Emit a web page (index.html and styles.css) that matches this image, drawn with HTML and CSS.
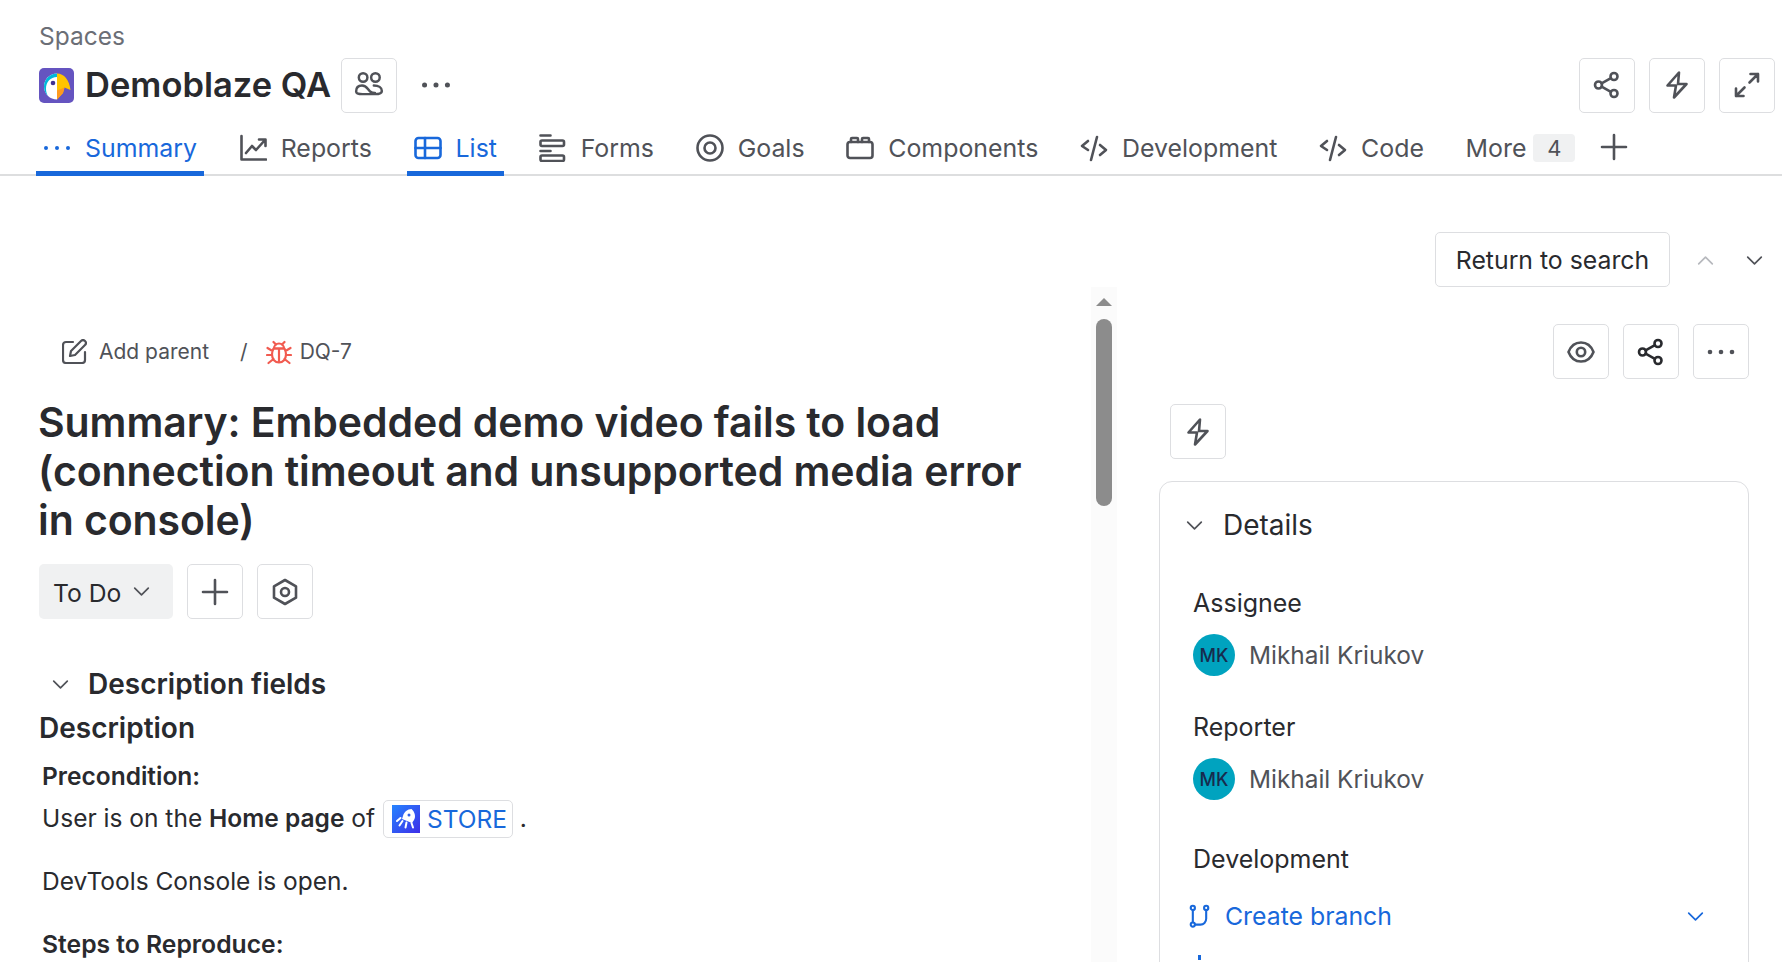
FILE: index.html
```html
<!DOCTYPE html>
<html lang="en">
<head>
<meta charset="utf-8">
<title>Demoblaze QA</title>
<link rel="stylesheet" href="styles.css">
</head>
<body>
<header class="head">
  <div class="spaces">Spaces</div>
  <div class="head-row">
    <svg class="logo" viewBox="0 0 35 35"><rect width="35" height="35" rx="5" fill="#6554c0"/><path d="M18 5.500a13 13 0 0 0 0 26z" fill="#fff"/><path d="M18 5.500a13 13 0 0 0-13 13c0 4 1.500 7 4 9.500-1.500-2.500-2-5-2-7.500C7 14 11.500 9 18 9z" fill="#00b8d9"/><path d="M18 5.500c7 0 12.500 6.500 13.500 16.500l-6-2.500-1.500 5.500-6 6.500z" fill="#ffc400"/><path d="M18 22.500l7.500-3L24 25l-6 6.500z" fill="#ff991f"/><circle cx="14" cy="15" r="2.300" fill="#403294"/></svg>
    <h1 class="space-name">Demoblaze QA</h1>
    <button class="btn head-people" aria-label="People">
      <svg class="ico" viewBox="0 0 28 28"><circle cx="8.500" cy="7" r="4"/><circle cx="20" cy="7" r="4"/><path d="M2 20c0-4 2.500-5.500 5.500-5.500 4.500 0 5 3.500 7.500 5.500 1.500 1.200 3 1.500 4.500 1.500M18.500 14.500c4.500 0 7.500 2 7.500 5 0 2-2 3-6.500 3H8c-4 0-6-.8-6-2.500"/></svg>
    </button>
    <svg class="ico dots-head" viewBox="0 0 28 28"><circle cx="4" cy="14" r="2.200" class="fill"/><circle cx="14" cy="14" r="2.200" class="fill"/><circle cx="24" cy="14" r="2.200" class="fill"/></svg>
    <div class="head-actions">
      <button class="btn" aria-label="Share">
        <svg class="ico" viewBox="0 0 28 28"><use href="#share"/></svg>
      </button>
      <button class="btn" aria-label="Automation">
        <svg class="ico" viewBox="0 0 28 28"><use href="#bolt"/></svg>
      </button>
      <button class="btn" aria-label="Expand">
        <svg class="ico" viewBox="0 0 28 28"><path d="M16.500 11.500L25 3M17.500 3H25v7.500M11.500 16.500L3 25M3 17.500V25h7.500"/></svg>
      </button>
    </div>
  </div>
  <nav class="tabs">
    <a class="tab active"><svg class="ico" viewBox="0 0 28 28"><circle cx="3" cy="14" r="2" class="fill"/><circle cx="14" cy="14" r="2" class="fill"/><circle cx="25" cy="14" r="2" class="fill"/></svg>Summary</a>
    <a class="tab"><svg class="ico" viewBox="0 0 28 28"><path d="M2.500 2v23.500H27M7 19l6-7 4 4 9-10M20 5.500h6.500V12"/></svg>Reports</a>
    <a class="tab active"><svg class="ico" viewBox="0 0 28 28"><rect x="1.500" y="4" width="25" height="20" rx="3"/><path d="M1.500 14h25M11 4v20"/></svg>List</a>
    <a class="tab"><svg class="ico" viewBox="0 0 28 28"><path d="M1.500 1.500h10M1.500 17h10"/><rect x="1.500" y="6.500" width="23.500" height="5.500" rx="1.500"/><rect x="1.500" y="21.500" width="23.500" height="5.500" rx="1.500"/></svg>Forms</a>
    <a class="tab"><svg class="ico" viewBox="0 0 28 28"><circle cx="14" cy="14" r="12.500"/><circle cx="14" cy="14" r="5.500"/></svg>Goals</a>
    <a class="tab"><svg class="ico" viewBox="0 0 28 28"><rect x="1.500" y="8" width="25" height="16" rx="2.500"/><path d="M5 8V5a1 1 0 0 1 1-1h5a1 1 0 0 1 1 1v3M16 8V5a1 1 0 0 1 1-1h5a1 1 0 0 1 1 1v3"/></svg>Components</a>
    <a class="tab"><svg class="ico" viewBox="0 0 28 28"><path d="M8 7l-6 5 6 4M20 11l6 5-6 5M17 3l-6 23"/></svg>Development</a>
    <a class="tab"><svg class="ico" viewBox="0 0 28 28"><path d="M8 7l-6 5 6 4M20 11l6 5-6 5M17 3l-6 23"/></svg>Code</a>
    <a class="tab tab-more">More<span class="badge">4</span></a>
    <svg class="ico tab-plus" viewBox="0 0 28 28"><path d="M14 2v24M2 14h24"/></svg>
  </nav>
</header>

<div class="return-row">
  <button class="btn btn-text">Return to search</button>
  <svg class="ico chev chev-off" viewBox="0 0 20 20"><path d="M2 14l8-8 8 8"/></svg>
  <svg class="ico chev chev-dark" viewBox="0 0 20 20"><path d="M2 6l8 8 8-8"/></svg>
</div>

<main class="work">
  <section class="issue">
    <div class="issue-body">
      <div class="crumbs">
        <svg class="ico crumb-edit" viewBox="0 0 25 25"><path d="M11 3H4a3 3 0 0 0-3 3v15a3 3 0 0 0 3 3h16a3 3 0 0 0 3-3v-8"/><path d="M8 17l1-5L19 2a2.500 2.500 0 0 1 4 4L13 16z"/></svg>
        <span class="crumb-text">Add parent</span>
        <span class="crumb-sep">/</span>
        <svg class="ico bug" viewBox="0 0 26 26"><path d="M8 9.500a5 5 0 0 1 10 0z"/><path d="M7.500 9.500h11c1 2 1.500 4 1.500 6 0 4.500-3 8-7 8s-7-3.500-7-8c0-2 .5-4 1.500-6zM13 10v13M7.500 3L10 5.500M18.500 3L16 5.500M1.500 9l5 3M24.500 9l-5 3M1 16h5M25 16h-5M2.500 24l5-4M23.500 24l-5-4"/></svg>
        <span class="crumb-text crumb-key">DQ-7</span>
      </div>
      <h2 class="issue-title">Summary: Embedded demo video fails to load (connection timeout and unsupported media error in console)</h2>
      <div class="status-row">
        <button class="status">To Do<svg class="ico status-chev" viewBox="0 0 20 20"><path d="M2 6l8 8 8-8"/></svg></button>
        <button class="btn" aria-label="Add"><svg class="ico" viewBox="0 0 28 28"><path d="M14 2v24M2 14h24"/></svg></button>
        <button class="btn" aria-label="Settings"><svg class="ico" viewBox="0 0 28 28"><path d="M14 2l11 6.300v11.400L14 26 3 19.700V8.300z"/><circle cx="14" cy="14" r="4"/></svg></button>
      </div>
      <div class="fields-head">
        <svg class="ico fields-chev" viewBox="0 0 20 20"><path d="M2 6l8 8 8-8"/></svg>
        <h3>Description fields</h3>
      </div>
      <h3 class="desc-label">Description</h3>
      <div class="desc">
        <p class="line"><strong>Precondition:</strong></p>
        <p class="line line-user">User is on the <strong>Home page</strong> of <a class="chip"><svg class="chip-ico" viewBox="0 0 28 28"><defs><linearGradient id="st" x1="0" y1="0" x2="1" y2="1"><stop offset="0" stop-color="#2684ff"/><stop offset="1" stop-color="#3d2ee8"/></linearGradient></defs><rect width="28" height="28" fill="url(#st)"/><path d="M19.500 4c-4 0-7.500 3-8.500 7l-1 3 10 4 2-3c2-3 1-8-2.500-11z" fill="#fff"/><circle cx="17" cy="10" r="1.500" fill="#2f5fe8"/><path d="M8.500 13l-3.500 3M10.500 16l-3 4.500M14.500 17.500l-1 5M19.500 18l1.500 4.500" stroke="#fff" stroke-width="2" stroke-linecap="round" fill="none"/></svg>STORE</a> .</p>
        <p class="line line-dev">DevTools Console is open.</p>
        <p class="line line-steps"><strong>Steps to Reproduce:</strong></p>
      </div>
    </div>
    <div class="scroll">
      <span class="scroll-arrow"></span>
      <span class="scroll-thumb"></span>
    </div>
  </section>

  <aside class="side">
    <div class="side-actions">
      <button class="btn" aria-label="Watch"><svg class="ico" viewBox="0 0 28 28"><path d="M1.500 14C4 7.500 9 4.500 14 4.500S24 7.500 26.500 14C24 20.500 19 23.500 14 23.500S4 20.500 1.500 14z"/><circle cx="14" cy="14" r="4.200"/></svg></button>
      <button class="btn" aria-label="Share"><svg class="ico ico-dark" viewBox="0 0 28 28"><use href="#share"/></svg></button>
      <button class="btn" aria-label="More"><svg class="ico" viewBox="0 0 28 28"><circle cx="3" cy="14" r="2.300" class="fill"/><circle cx="14" cy="14" r="2.300" class="fill"/><circle cx="25" cy="14" r="2.300" class="fill"/></svg></button>
    </div>
    <button class="btn side-bolt" aria-label="Automation"><svg class="ico" viewBox="0 0 28 28"><use href="#bolt"/></svg></button>
    <div class="panel">
      <div class="panel-head">
        <svg class="ico panel-chev" viewBox="0 0 20 20"><path d="M2 6l8 8 8-8"/></svg>
        <span>Details</span>
      </div>
      <div class="label label-assignee">Assignee</div>
      <div class="person"><span class="avatar">MK</span><span>Mikhail Kriukov</span></div>
      <div class="label label-reporter">Reporter</div>
      <div class="person"><span class="avatar">MK</span><span>Mikhail Kriukov</span></div>
      <div class="label label-dev">Development</div>
      <div class="branch">
        <svg class="ico branch-ico" viewBox="0 0 22 24"><circle cx="4" cy="3.500" r="2.200"/><circle cx="18" cy="3.500" r="2.200"/><circle cx="4" cy="21" r="2.200"/><path d="M4 6v12.500M18 6v9a6 6 0 0 1-6 6H6.500"/></svg>
        <span>Create branch</span>
        <svg class="ico branch-chev" viewBox="0 0 20 20"><path d="M2 6l8 8 8-8"/></svg>
      </div>
      <span class="clip-dot"></span>
    </div>
  </aside>
</main>

<svg class="defs" aria-hidden="true">
  <defs>
    <g id="share"><circle cx="5.500" cy="14" r="3.500"/><circle cx="21" cy="5.500" r="3.500"/><circle cx="21" cy="22.500" r="3.500"/><path d="M8.600 12.300l9.300-5.100M8.600 15.700l9.300 5.100"/></g>
    <path id="bolt" d="M16 1.500L4.500 14.500H13L11 26.500 23.500 13H15z"/>
  </defs>
</svg>
</body>
</html>
```
FILE: styles.css
```css
* { box-sizing: border-box; }
html, body { margin: 0; height: 962px; overflow: hidden; background: #fff; }
body { font-family: Inter, "Liberation Sans", sans-serif; font-size: 24.500px; color: #292a2e; width: 1782px; }
h1, h2, h3, p { margin: 0; }
a { text-decoration: none; color: inherit; }
button { font: inherit; color: inherit; background: #fff; cursor: pointer; }
.defs { width: 0; height: 0; display: block; }

.ico { fill: none; stroke: #505258; stroke-width: 2.600; stroke-linecap: round; stroke-linejoin: round; width: 28px; height: 28px; flex: none; display: block; }
.ico .fill { fill: #505258; stroke: none; }
.ico-dark { stroke: #292a2e; }

.btn { width: 56px; height: 55px; flex: none; padding: 0; border: 1.500px solid #dddee1; border-radius: 5px; display: flex; align-items: center; justify-content: center; }

.head { box-shadow: inset 0 -2px 0 #dddedf; }
.spaces { height: 57px; padding-top: 17px; line-height: 38px; padding-left: 39px; color: #6b6e76; font-size: 24.500px; }
.head-row { height: 56px; display: flex; align-items: center; padding: 0 7px 0 39px; }
.logo { width: 35px; height: 35px; flex: none; }
.space-name { font-size: 34.500px; font-weight: 600; line-height: 46px; margin-left: 11px; }
.head-people { margin-left: 10px; }
.head-people .ico { width: 30px; height: 30px; stroke-width: 2.300; }
.dots-head { margin-left: 23px; width: 32px; height: 32px; }
.head-actions { margin-left: auto; display: flex; gap: 14px; }

.tabs { height: 63px; padding: 7px 0 0 36px; display: flex; gap: 27.700px; align-items: stretch; }
.tab { display: flex; align-items: center; gap: 14px; padding: 4px 7px 0; color: #505258; border-bottom: 5px solid transparent; line-height: 30px; font-size: 24.900px; }
.tab.active { color: #1868db; border-bottom-color: #1868db; }
.tab.active .ico { stroke: #1868db; }
.tab.active .ico .fill { fill: #1868db; }
.tab-more { gap: 7px; }
.badge { width: 42px; height: 28px; background: #f0f1f2; border-radius: 4px; text-align: center; line-height: 28px; font-size: 22px; }
.tab-plus { align-self: center; margin: -3px 0 0 -10px; }

.return-row { height: 111px; padding-top: 56px; display: flex; align-items: center; }
.btn-text { width: 235px; margin-left: 1435px; font-size: 24.800px; }
.chev { width: 17px; height: 17px; stroke-width: 2; margin-top: 2px; }
.chev-off { margin-left: 27px; stroke: #b7b9be; }
.chev-dark { margin-left: 32px; }

.work { display: flex; height: 675px; }
.issue { width: 1117px; display: flex; flex: none; }
.issue-body { width: 1091px; padding-left: 39px; overflow: hidden; }
.crumbs { margin-top: 52px; height: 25px; display: flex; align-items: center; color: #505258; font-size: 21px; }
.crumb-edit { width: 25px; height: 25px; margin-left: 23px; stroke-width: 2.200; }
.crumb-text { margin-left: 12px; }
.crumb-sep { margin-left: 31px; margin-right: 18px; }
.bug { width: 26px; height: 26px; stroke: #f15b50; stroke-width: 2.200; }
.crumb-key { margin-left: 8px; }
.issue-title { margin-top: 34px; font-size: 41px; line-height: 49px; font-weight: 600; padding-right: 40px; letter-spacing: -0.090px; margin-left: -1px; }
.status-row { margin-top: 19px; display: flex; gap: 14px; }
.status { width: 134px; height: 55px; border: 0; border-radius: 5px; background: #f0f1f2; display: flex; align-items: center; padding: 2px 0 0 14px; font-size: 24.700px; }
.status-chev { width: 17px; height: 17px; margin-left: 12px; stroke-width: 2; margin-top: -2px; }
.fields-head { margin-top: 45px; height: 40px; display: flex; align-items: center; }
.fields-head h3 { font-size: 28px; font-weight: 600; margin-left: 19px; line-height: 40px; }
.fields-chev { width: 17px; height: 17px; margin-left: 13px; stroke-width: 2; }
.desc-label { margin-top: 4px; height: 40px; line-height: 40px; font-size: 28px; font-weight: 600; }
.desc { margin-top: 8px; padding-left: 3px; }
.line { line-height: 40px; min-height: 40px; }
.line strong { font-weight: 600; }
.line-user { margin-top: 2px; }
.line-dev { margin-top: 23px; }
.line-steps { margin-top: 23px; font-size: 24.700px; }
.chip { display: inline-flex; align-items: center; gap: 7px; height: 38px; width: 130px; padding-left: 8px; border: 1.500px solid #dddee1; border-radius: 5px; color: #1868db; vertical-align: middle; margin: -3px 0 0 1px; }
.chip-ico { width: 28px; height: 28px; flex: none; }

.scroll { width: 26px; background: #fbfbfb; display: flex; flex-direction: column; align-items: center; padding-top: 11px; }
.scroll-arrow { width: 0; height: 0; border-left: 8px solid transparent; border-right: 8px solid transparent; border-bottom: 8px solid #8c8c8c; }
.scroll-thumb { width: 16px; height: 187px; margin-top: 13px; border-radius: 8px; background: #8c8c8c; }

.side { flex: 1; min-width: 0; }
.side-actions { margin-top: 37px; padding-right: 33px; display: flex; justify-content: flex-end; gap: 14px; }
.side-bolt { margin: 25px 0 0 53px; }
.panel { margin: 22px 33px 0 42px; height: 500px; border: 1.500px solid #dddee1; border-radius: 13px; padding: 23px 0 0 33px; }
.panel-head { height: 40px; display: flex; align-items: center; font-size: 28px; line-height: 40px; }
.panel-chev { width: 17px; height: 17px; margin-right: 20px; stroke-width: 2; margin-left: -7px; }
.label { height: 40px; line-height: 40px; font-size: 25px; }
.label-assignee { margin-top: 38px; }
.label-reporter { margin-top: 32px; }
.label-dev { margin-top: 39px; }
.person { margin-top: 11px; height: 42px; display: flex; align-items: center; gap: 14px; color: #505258; font-size: 24.400px; }
.avatar { width: 42px; height: 42px; border-radius: 50%; background: #00a3bf; color: #172b4d; font-size: 18px; font-weight: 500; display: flex; align-items: center; justify-content: center; }
.label-reporter { margin-top: 31px; }
.branch { margin: 17px 0 0 -4px; height: 40px; padding-right: 44px; display: flex; align-items: center; color: #1868db; font-size: 24.800px; }
.branch-ico { width: 21px; height: 24px; stroke: #1868db; stroke-width: 2.200; margin-right: 15px; }
.branch-chev { width: 17px; height: 17px; stroke: #1868db; stroke-width: 2; margin-left: auto; }
.clip-dot { display: block; width: 3px; height: 5px; background: #1868db; margin: 19px 0 0 5px; }
```
